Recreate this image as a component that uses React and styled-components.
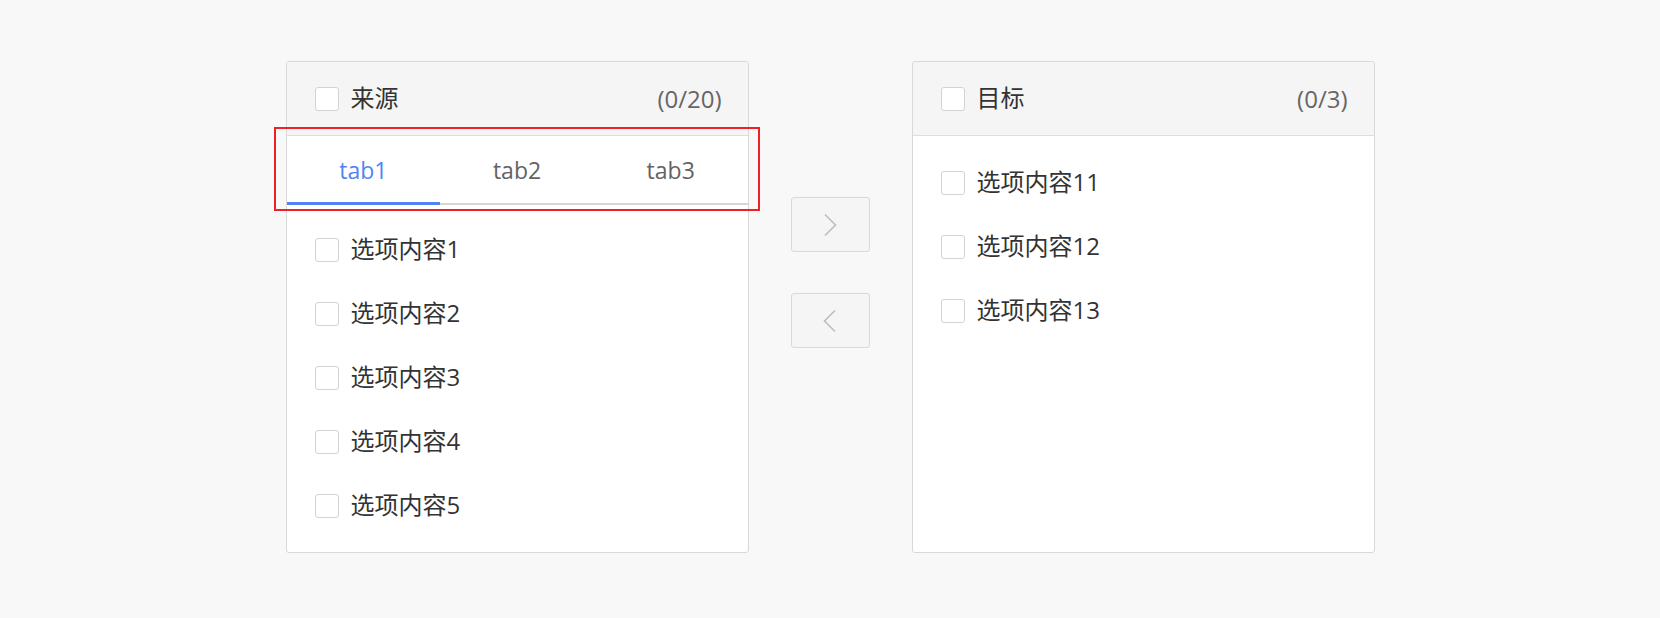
import React from "react";
import styled, { createGlobalStyle } from "styled-components";

const Global = createGlobalStyle`
  * { box-sizing: border-box; }
  html, body { margin: 0; padding: 0; background: #f8f8f8; }
  body { font-family: "Open Sans", "Noto Sans CJK SC", sans-serif; color: #333; }
`;

const Page = styled.div`
  height: 618px;
  display: flex;
  align-items: center;
  justify-content: center;
  padding-bottom: 4px;
`;

const Row = styled.div`
  display: flex;
  align-items: flex-start;
  gap: 42px;
`;

const Panel = styled.div`
  position: relative;
  width: 463px;
  height: 492px;
  background: #fff;
  border: 1px solid #d9d9d9;
  border-radius: 3px;
  display: flex;
  flex-direction: column;
`;

const Header = styled.div`
  height: 74px;
  flex: none;
  display: flex;
  align-items: center;
  padding: 0 26px 0 28px;
  background: #f5f5f5;
  border-bottom: 1px solid #dedede;
  border-radius: 3px 3px 0 0;
`;

const Title = styled.span`
  font-size: 24px;
  line-height: 1;
  color: #333;
  margin-left: 12px;
  margin-bottom: 2px;
  flex: 1;
`;

const Count = styled.span`
  font-size: 24px;
  line-height: 1;
  color: #666;
`;

const Box = styled.span`
  width: 24px;
  height: 24px;
  flex: none;
  border: 1px solid #d3d3d3;
  border-radius: 3px;
  background: #fff;
`;

const TabsWrap = styled.div`
  position: relative;
  display: flex;
  flex: none;
`;

const Tab = styled.div`
  flex: 1;
  height: 69px;
  display: flex;
  align-items: center;
  justify-content: center;
  font-size: 23px;
  color: ${p => (p.$active ? "#5283f2" : "#636363")};
  border-bottom: ${p => (p.$active ? "3px solid #5283f2" : "2px solid #d6d6d6")};
  padding-top: ${p => (p.$active ? "1px" : "0")};
`;

const Highlight = styled.div`
  position: absolute;
  left: -13px;
  right: -12px;
  top: -9px;
  bottom: -6px;
  border: 2px solid #ee2126;
  pointer-events: none;
`;

const List = styled.div`
  padding-top: ${p => p.$top}px;
  display: flex;
  flex-direction: column;
`;

const Item = styled.div`
  height: 64px;
  display: flex;
  align-items: center;
  padding-left: 28px;
`;

const Label = styled.span`
  font-size: 24px;
  line-height: 1;
  color: #333;
  margin-left: 12px;
  margin-bottom: 2px;
`;

const Buttons = styled.div`
  padding-top: 136px;
  display: flex;
  flex-direction: column;
  gap: 41px;
`;

const MoveBtn = styled.div`
  width: 79px;
  height: 55px;
  border: 1px solid #d9d9d9;
  border-radius: 3px;
  background: #f5f5f5;
  display: flex;
  align-items: center;
  justify-content: center;
`;

const Chevron = ({ dir }) => (
  <svg width="14" height="24" viewBox="0 0 14 24">
    <path
      d={dir === "right" ? "M2 1.5 L12.5 12 L2 22.5" : "M12 1.5 L1.5 12 L12 22.5"}
      fill="none"
      stroke="#bdbdbd"
      strokeWidth="1.6"
    />
  </svg>
);

const source = [1, 2, 3, 4, 5].map(n => `选项内容${n}`);
const target = [11, 12, 13].map(n => `选项内容${n}`);

export default function App() {
  return (
    <>
      <Global />
      <Page>
        <Row>
          <Panel>
            <Header>
              <Box />
              <Title>来源</Title>
              <Count>(0/20)</Count>
            </Header>
            <TabsWrap>
              <Tab $active>tab1</Tab>
              <Tab>tab2</Tab>
              <Tab>tab3</Tab>
              <Highlight />
            </TabsWrap>
            <List $top={13}>
              {source.map(t => (
                <Item key={t}>
                  <Box />
                  <Label>{t}</Label>
                </Item>
              ))}
            </List>
          </Panel>
          <Buttons>
            <MoveBtn><Chevron dir="right" /></MoveBtn>
            <MoveBtn><Chevron dir="left" /></MoveBtn>
          </Buttons>
          <Panel>
            <Header>
              <Box />
              <Title>目标</Title>
              <Count>(0/3)</Count>
            </Header>
            <List $top={15}>
              {target.map(t => (
                <Item key={t}>
                  <Box />
                  <Label>{t}</Label>
                </Item>
              ))}
            </List>
          </Panel>
        </Row>
      </Page>
    </>
  );
}
